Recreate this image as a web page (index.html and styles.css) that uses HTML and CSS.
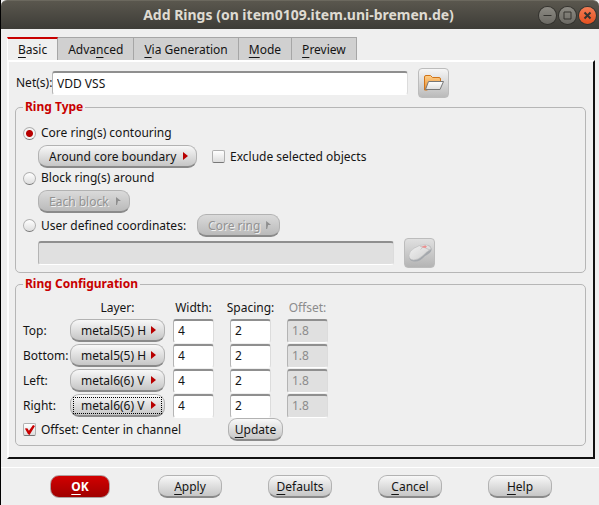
FILE: index.html
```html
<!DOCTYPE html>
<html lang="en">
<head>
<meta charset="utf-8">
<title>Add Rings</title>
<link rel="stylesheet" href="styles.css">
</head>
<body>
<div class="window">
  <header class="titlebar">
    <h1 class="title">Add Rings (on item0109.item.uni-bremen.de)</h1>
    <div class="window-buttons">
      <button class="win-btn" type="button" aria-label="Minimize"><svg viewBox="0 0 17 17"><path d="M4.500 8.500h8"/></svg></button>
      <button class="win-btn" type="button" aria-label="Maximize"><svg viewBox="0 0 17 17"><path d="M5 5h7v7h-7z"/></svg></button>
      <button class="win-btn close" type="button" aria-label="Close"><svg viewBox="0 0 17 17"><path d="M5.500 5.500l6 6M11.500 5.500l-6 6"/></svg></button>
    </div>
  </header>

  <form class="dialog">
    <nav class="tabs" role="tablist">
      <button class="tab active" type="button" role="tab" aria-selected="true"><u>B</u>asic</button>
      <button class="tab" type="button" role="tab">Adva<u>n</u>ced</button>
      <button class="tab" type="button" role="tab"><u>V</u>ia Generation</button>
      <button class="tab" type="button" role="tab"><u>M</u>ode</button>
      <button class="tab" type="button" role="tab"><u>P</u>review</button>
    </nav>

    <section class="panel">
      <div class="net-row">
        <label for="nets">Net(s):</label>
        <input class="field grow" id="nets" type="text" value="VDD VSS">
        <button class="icon-btn" type="button" aria-label="Browse nets">
          <svg class="icon" viewBox="0 0 24 20">
            <defs><linearGradient id="folder" x2="0" y2="1"><stop offset="0" stop-color="#ffd08a"/><stop offset="1" stop-color="#e58a30"/></linearGradient>
            <linearGradient id="flap" x2="0" y2="1"><stop offset="0" stop-color="#fff"/><stop offset="1" stop-color="#dedede"/></linearGradient></defs>
            <path d="M2.500 17V4Q2.500 2.500 4 2.500h4.500L10.500 4.500H17Q18.500 4.500 18.500 6v3L5 17z" fill="url(#folder)" stroke="#d17419"/>
            <path d="M6.500 8.500H21.500L18 16.500H3.500z" fill="url(#flap)" stroke="#777"/>
          </svg>
        </button>
      </div>

      <fieldset class="group">
        <legend>Ring Type</legend>
        <div class="stack">
          <label class="choice"><input class="radio" type="radio" name="type" checked>Core ring(s) contouring</label>
          <div class="sub-row">
            <span class="menu wide"><select aria-label="Contour"><option>Around core boundary</option></select></span>
            <label class="choice"><input class="check" type="checkbox">Exclude selected objects</label>
          </div>
          <label class="choice"><input class="radio" type="radio" name="type">Block ring(s) around</label>
          <div class="sub-row">
            <span class="menu mid off"><select aria-label="Block" disabled><option>Each block</option></select></span>
          </div>
          <div class="coord-row">
            <label class="choice"><input class="radio" type="radio" name="type">User defined coordinates:</label>
            <span class="menu small off"><select aria-label="Coordinates ring" disabled><option>Core ring</option></select></span>
          </div>
          <div class="path-row">
            <input class="field grow" type="text" aria-label="Coordinates" disabled>
            <button class="icon-btn off" type="button" aria-label="Pick coordinates" disabled>
              <svg class="icon" viewBox="0 0 24 18">
                <defs><linearGradient id="mouse" x2="1" y2="1"><stop offset="0" stop-color="#f2f2f2"/><stop offset="1" stop-color="#cecece"/></linearGradient></defs>
                <path d="M1 12Q1 7 6.500 4Q12 0 19 1Q24 2 23.500 6Q23 9 17 12Q12 18 6 17.500Q1 17 1 12z" fill="#a4a8ad"/>
                <path d="M1 11.500Q1 7 6.500 4Q12 0 19 1Q23 2 23 5Q18 8 15 11.500Q10 16 5.500 16Q1 15.500 1 11.500z" fill="url(#mouse)" stroke="#c0c0c0" stroke-width=".6"/>
                <path d="M12 2.200Q17 3.500 22 6M12.500 5.500Q14 3.500 18 1.500" fill="none" stroke="#bbb" stroke-width=".7"/>
                <path d="M13 3l4-1.500 2 1-1.500 1.500z" fill="#ef8f8f"/>
              </svg>
            </button>
          </div>
        </div>
      </fieldset>

      <fieldset class="group">
        <legend>Ring Configuration</legend>
        <div class="config">
          <span class="head layer">Layer:</span>
          <span class="head">Width:</span>
          <span class="head">Spacing:</span>
          <span class="head dim">Offset:</span>

          <label for="top">Top:</label>
          <span class="menu"><select id="top"><option>metal5(5) H</option></select></span>
          <input class="field num" aria-label="Top width" value="4">
          <input class="field num" aria-label="Top spacing" value="2">
          <input class="field num" aria-label="Top offset" value="1.8" disabled>

          <label for="bottom">Bottom:</label>
          <span class="menu"><select id="bottom"><option>metal5(5) H</option></select></span>
          <input class="field num" aria-label="Bottom width" value="4">
          <input class="field num" aria-label="Bottom spacing" value="2">
          <input class="field num" aria-label="Bottom offset" value="1.8" disabled>

          <label for="left">Left:</label>
          <span class="menu"><select id="left"><option>metal6(6) V</option></select></span>
          <input class="field num" aria-label="Left width" value="4">
          <input class="field num" aria-label="Left spacing" value="2">
          <input class="field num" aria-label="Left offset" value="1.8" disabled>

          <label for="right">Right:</label>
          <span class="menu focused"><select id="right"><option>metal6(6) V</option></select></span>
          <input class="field num" aria-label="Right width" value="4">
          <input class="field num" aria-label="Right spacing" value="2">
          <input class="field num" aria-label="Right offset" value="1.8" disabled>
        </div>
        <div class="center-row">
          <label class="choice"><input class="check" type="checkbox" checked>Offset: Center in channel</label>
          <button class="pill update" type="button"><u>U</u>pdate</button>
        </div>
      </fieldset>
    </section>

    <footer class="actions">
      <button class="pill primary" type="submit"><u>O</u>K</button>
      <button class="pill" type="button"><u>A</u>pply</button>
      <button class="pill" type="button"><u>D</u>efaults</button>
      <button class="pill" type="button"><u>C</u>ancel</button>
      <button class="pill" type="button"><u>H</u>elp</button>
    </footer>
  </form>
</div>
</body>
</html>
```

FILE: styles.css
```css
* { box-sizing: border-box; }

body {
  margin: 0;
  background: #efefef;
  color: #141414;
  font: 12px/18px "Noto Sans", "Open Sans", sans-serif;
}

button, input, select { font: inherit; color: inherit; margin: 0; }
u { text-decoration: underline; text-underline-offset: 3px; text-decoration-skip-ink: none; }

.window {
  min-height: 100vh;
  background: #efefef;
  border-left: 1px solid #000;
}

/* Title bar */
.titlebar {
  display: flex;
  align-items: center;
  height: 29px;
  padding: 0 3px 0 57px;
  background: linear-gradient(#5a574e, #3d3c37);
  border-top: 1px solid #6b685e;
  border-radius: 6px 6px 0 0;
}
.title {
  flex: 1;
  margin: 0;
  color: #dfdbd2;
  font-size: 14px;
  font-weight: 700;
  text-align: center;
  white-space: nowrap;
}
.window-buttons { display: flex; gap: 3px; }
.win-btn {
  width: 17px;
  height: 17px;
  padding: 0;
  border: 0;
  border-radius: 50%;
  background: linear-gradient(#8c8a83, #6c6a64);
  box-shadow: 0 0 0 1px #34332f;
}
.win-btn svg { display: block; fill: none; stroke: #34332f; stroke-width: 1; }
.win-btn.close { background: linear-gradient(#f47d55, #e5501f); }
.win-btn.close svg { stroke-width: 2; }

/* Tabs */
.dialog { margin: 0; padding-top: 8px; }
.tabs { display: flex; padding-left: 6px; }
.tab {
  height: 23px;
  padding: 2px 10px 0;
  border: solid #a6a6a6;
  border-width: 1px 1px 0 0;
  background: #d0d0d0;
  white-space: nowrap;
}
.tab.active {
  padding-top: 0;
  background: #efefef;
  border-top: 2px solid #c80000;
  border-left: 1px solid #fff;
}

/* Main panel */
.panel {
  margin: 0 4px 8px 6px;
  padding: 6px 7px 11px 6px;
  border: 2px solid;
  border-color: #fff #111 #111 #fff;
}
.net-row { display: flex; align-items: center; padding: 0 137px 1px 1px; }
.net-row label { width: 36px; white-space: nowrap; }
.grow { flex: 1; min-width: 0; }

.field {
  height: 24px;
  padding: 0 4px 1px;
  border: 1px solid #dcdcdc;
  border-top: 2px solid #8f8f8f;
  border-left-color: #b4b4b4;
  border-bottom-color: #fff;
  border-radius: 3px;
  background: #fff;
  outline: 0;
}
.field:disabled { background: #e0e0e0; color: #8c8c8c; }

.icon-btn {
  display: flex;
  align-items: center;
  justify-content: center;
  width: 31px;
  height: 30px;
  margin-left: 10px;
  padding: 0;
  border: 1px solid #bcbcbc;
  border-radius: 4px;
  background: linear-gradient(#f6f6f6, #bababa);
}
.icon-btn.off { background: linear-gradient(#e0e0e0, #b4b4b4); }
.icon { width: 24px; height: 20px; }

/* Groups */
.group {
  min-width: 0;
  margin: 0 0 3px;
  padding: 0 8px 4px 7px;
  border: 1px solid #b6b6b6;
  border-radius: 5px;
}
.group:last-child { margin-bottom: 0; }
legend {
  padding: 0 2px;
  color: #c80000;
  font-weight: 700;
  line-height: 16px;
}

.choice { display: flex; align-items: center; height: 18px; white-space: nowrap; }
.radio, .check {
  appearance: none;
  flex: none;
  width: 13px;
  height: 13px;
  margin-right: 5px;
  border: 1px solid #b0b0b0;
  border-bottom-color: #777;
  background: linear-gradient(#fff, #ddd);
}
.radio { border-radius: 50%; }
.radio:checked { background: radial-gradient(circle, #b80000 0 3px, #f4f4f4 4px); }
.check { border-radius: 2px; }
.check:checked::after {
  content: "";
  display: block;
  height: 11px;
  background: #c80000;
  clip-path: polygon(8% 42%, 30% 38%, 45% 62%, 82% 8%, 100% 18%, 50% 100%, 36% 92%);
}

.pill, .menu select {
  height: 23px;
  padding: 1px 0 0;
  border: 1px solid #b2b2b2;
  border-bottom: 2px solid #8a8a8a;
  border-radius: 9px;
  background: linear-gradient(#f8f8f8, #c6c6c6);
}
.menu { position: relative; display: block; width: 95px; height: 23px; }
.menu select {
  appearance: none;
  display: block;
  width: 100%;
  padding: 2px 0 0 10px;
  outline: 0;
}
.menu::after {
  content: "";
  position: absolute;
  top: 7px;
  right: 9px;
  width: 5px;
  height: 8px;
  background: #b80000;
  clip-path: polygon(0 0, 100% 50%, 0 100%);
}
.menu.wide { width: 159px; }
.menu.mid { width: 92px; }
.menu.small { width: 83px; }
.menu.off select {
  opacity: 1;
  color: #929292;
  text-shadow: 1px 1px #f0f0f0;
  background: linear-gradient(#dadada, #bababa);
}
.menu.off::after { background: #8e8e8e; clip-path: polygon(0 0, 100% 50%, 40% 50%, 20% 100%, 0 100%); }
.menu.focused::before {
  content: "";
  position: absolute;
  inset: 3px;
  border: 1px dotted #000;
}

.stack { padding-top: 9px; }
.sub-row { display: flex; align-items: center; gap: 15px; margin: 3px 0 1px; padding-left: 15px; }
.coord-row { display: flex; align-items: center; gap: 11px; margin: 1px 0; }
.path-row { display: flex; align-items: center; padding: 0 142px 0 15px; }

.config {
  display: grid;
  grid-template-columns: 47px 95px 57px 57px 57px;
  grid-auto-rows: 23px;
  row-gap: 2px;
  align-items: center;
  padding-top: 2px;
}
.config .head { align-self: end; justify-self: center; }
.config .layer { grid-column: 2; }
.config .dim { color: #8c8c8c; }
.num { width: 41px; justify-self: center; }

.center-row { display: flex; align-items: center; margin-top: 1px; }
.center-row .choice { width: 205px; }
.pill.update { width: 55px; }

/* Footer buttons */
.actions {
  display: grid;
  grid-template-columns: repeat(5, 1fr);
  justify-items: center;
  padding: 7px 24px;
  border-top: 1px solid #fff;
}
.actions .pill { width: 64px; }
.actions .primary {
  width: 60px;
  padding-top: 0;
  border-color: #b0a0a0;
  border-bottom: 1px solid #b0a0a0;
  background: linear-gradient(#d20000, #a00000);
  color: #fff;
  font-weight: 700;
}
```
